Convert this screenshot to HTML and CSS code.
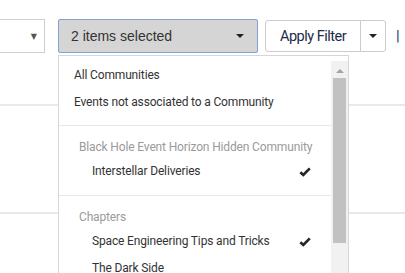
FILE: index.html
```html
<!DOCTYPE html>
<html>
<head>
<meta charset="utf-8">
<link rel="stylesheet" href="styles.css">
</head>
<body>
<div class="page">
  <div class="toolbar">
    <div class="select"><span class="small-arrow">▼</span></div>
    <div class="multi">
      <span class="multi-text">2 items selected</span>
      <span class="caret"></span>
    </div>
    <div class="btn-group">
      <div class="btn main">Apply Filter</div>
      <div class="btn split"><span class="caret"></span></div>
    </div>
    <span class="bar">|</span>
  </div>
  <div class="rows">
    <div class="row r1"></div>
    <div class="row r2"></div>
  </div>

  <div class="dropdown">
    <div class="list">
      <div class="group first">
        <div class="item top">All Communities</div>
        <div class="item top">Events not associated to a Community</div>
      </div>
      <div class="group">
        <div class="header">Black Hole Event Horizon Hidden Community</div>
        <div class="item child"><span>Interstellar Deliveries</span><svg class="check" width="12" height="10" viewBox="0 0 12 10"><polyline points="1.3,5.2 4.3,8 10.8,1.3" fill="none" stroke="#262626" stroke-width="2.6" stroke-linejoin="miter"/></svg></div>
      </div>
      <div class="group">
        <div class="header">Chapters</div>
        <div class="item child"><span>Space Engineering Tips and Tricks</span><svg class="check" width="12" height="10" viewBox="0 0 12 10"><polyline points="1.3,5.2 4.3,8 10.8,1.3" fill="none" stroke="#262626" stroke-width="2.6" stroke-linejoin="miter"/></svg></div>
        <div class="item child"><span>The Dark Side</span></div>
      </div>
    </div>
    <div class="scrollbar">
      <div class="up"></div>
      <div class="thumb"></div>
    </div>
  </div>
</div>
</body>
</html>
```
FILE: styles.css
```css
html, body {
  margin: 0;
  padding: 0;
  background: #fff;
  overflow: hidden;
}
.page {
  position: relative;
  width: 405px;
  height: 273px;
  overflow: hidden;
  font-family: Roboto, "Liberation Sans", sans-serif;
}
.toolbar {
  display: flex;
  align-items: flex-start;
  padding-top: 19px;
  height: 34px;
}
.select {
  flex-shrink: 0;
  margin-left: -20px;
  width: 56px;
  height: 32px;
  border: 1px solid #cfcfcf;
  background: #fff;
  display: flex;
  align-items: center;
  justify-content: flex-end;
  padding-right: 7px;
}
.small-arrow {
  font-size: 8px;
  color: #555;
  font-family: "DejaVu Sans", sans-serif;
}
.multi {
  flex-shrink: 0;
  margin-left: 13px;
  width: 173px;
  height: 32px;
  border: 1px solid #7ea1d9;
  border-radius: 2px;
  background: #d5d5d5;
  display: flex;
  align-items: center;
  justify-content: space-between;
  padding: 0 13px 0 12px;
}
.multi-text {
  font-family: "Liberation Sans", Arial, sans-serif;
  font-size: 14px;
  color: #333;
}
.caret {
  width: 0;
  height: 0;
  border-left: 4px solid transparent;
  border-right: 4px solid transparent;
  border-top: 4px solid #222;
}
.btn-group {
  flex-shrink: 0;
  display: flex;
  margin-left: 7px;
  margin-top: 1px;
}
.btn {
  flex-shrink: 0;
  height: 30px;
  border: 1px solid #ccc;
  background: #fff;
  display: flex;
  align-items: center;
  white-space: nowrap;
}
.btn.main {
  width: 94px;
  justify-content: center;
  font-size: 14.5px;
  color: #1e2b4a;
  letter-spacing: -0.5px;
  border-radius: 3px 0 0 3px;
}
.btn.split {
  border-left: 1px solid #ccc;
  margin-left: -1px;
  border-radius: 0 3px 3px 0;
  width: 24px;
  justify-content: center;
}
.bar {
  flex-shrink: 0;
  margin-left: 10px;
  margin-top: 8px;
  font-size: 15px;
  color: #24345a;
}
.rows {
  margin-top: 51px;
}
.row {
  height: 2px;
  background: #e9e9e9;
}
.row.r2 {
  margin-top: 106px;
}
.dropdown {
  position: absolute;
  left: 58px;
  top: 55px;
  width: 289px;
  height: 240px;
  border: 1px solid #d6d6d6;
  background: #fff;
  display: flex;
  padding-top: 5px;
}
.list {
  flex: 1;
  padding-top: 1px;
  font-size: 12px;
  letter-spacing: -0.15px;
  color: #333;
}
.group {
  padding: 10px 0 10px;
  border-top: 1px solid #e8e8e8;
}
.group.first {
  padding-top: 0;
  padding-bottom: 9px;
  border-top: none;
}
.item {
  height: 27px;
  line-height: 27px;
  display: flex;
  justify-content: space-between;
  align-items: center;
  white-space: nowrap;
}
.item.top {
  padding-left: 15px;
}
.item.child {
  padding-left: 33px;
  padding-right: 20px;
}
.header {
  height: 22px;
  line-height: 22px;
  padding-left: 20px;
  color: #9a9a9a;
  white-space: nowrap;
}
.check {
  display: block;
  flex-shrink: 0;
}
.scrollbar {
  width: 17px;
  background: #f1f1f1;
  display: flex;
  flex-direction: column;
  align-items: center;
}
.up {
  margin-top: 8px;
  width: 0;
  height: 0;
  border-left: 4px solid transparent;
  border-right: 4px solid transparent;
  border-bottom: 4px solid #a3a3a3;
}
.thumb {
  margin-top: 5px;
  width: 13px;
  height: 165px;
  background: #c1c1c1;
}
```
